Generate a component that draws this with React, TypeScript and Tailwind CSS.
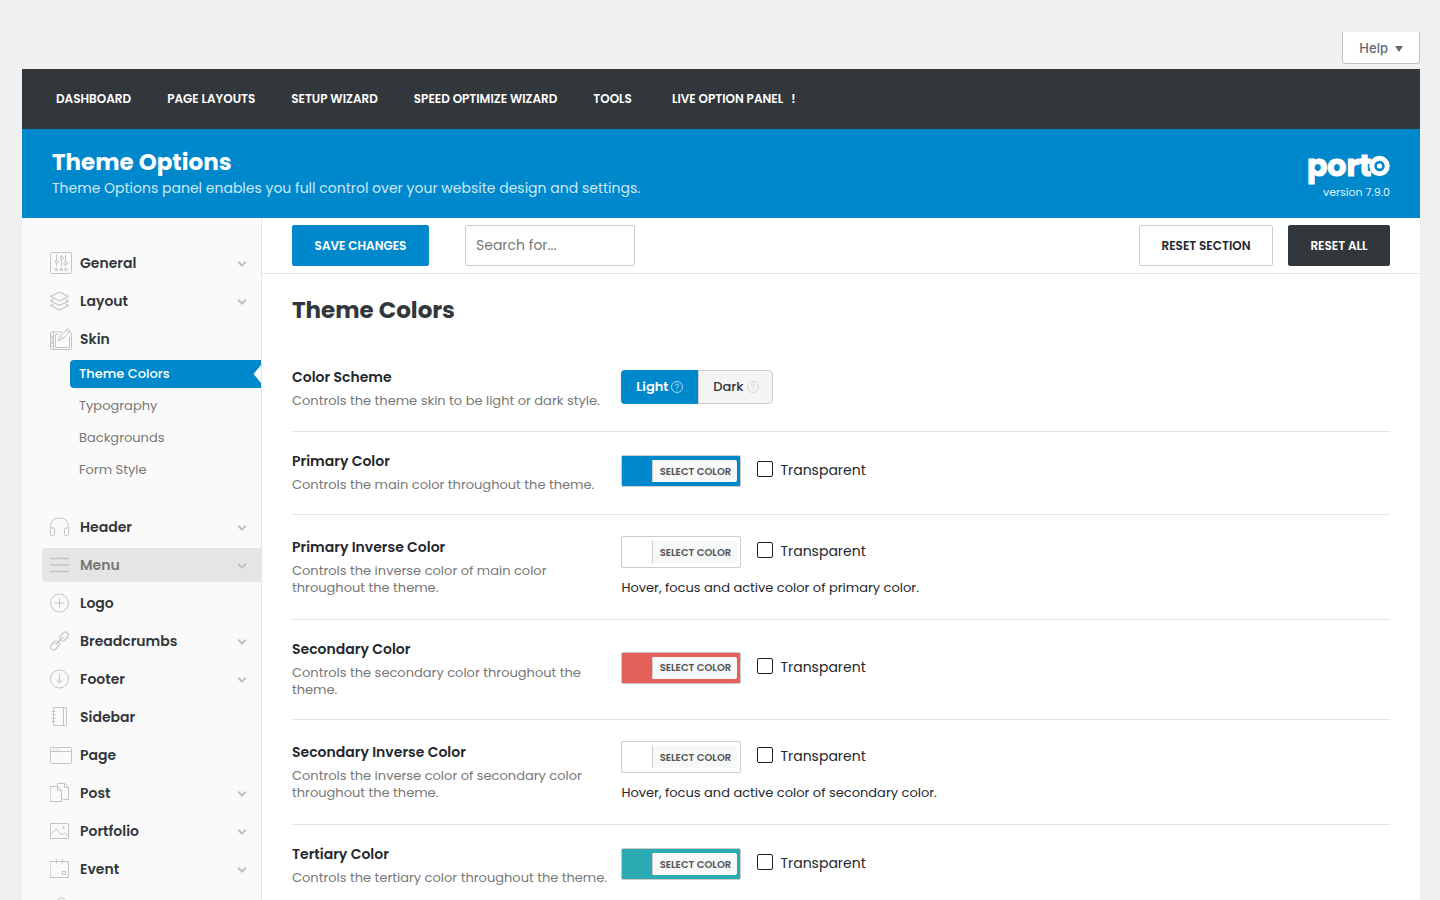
import type { ReactNode } from 'react'

const navLinks = ['DASHBOARD', 'PAGE LAYOUTS', 'SETUP WIZARD', 'SPEED OPTIMIZE WIZARD', 'TOOLS']

function Icon({ wide, children }: { wide?: boolean; children: ReactNode }) {
  return (
    <span className="flex w-[30px] shrink-0">
      <svg
        className={wide ? 'h-[22px] w-[22px]' : 'h-5 w-5'}
        viewBox={wide ? '0 0 22 22' : '0 0 20 20'}
        fill="none"
        stroke="#c2c4c6"
        strokeWidth="1"
        strokeLinecap="round"
        strokeLinejoin="round"
        aria-hidden="true"
      >
        {children}
      </svg>
    </span>
  )
}

const icons: Record<string, ReactNode> = {
  General: (
    <Icon wide>
      <rect x="0.5" y="0.5" width="21" height="21" rx="1" />
      <path d="M6.5 3v5M6.5 11v3M11.5 3.500v1M11.500 7.500v6.500M15.500 3v7M15.500 13v1" />
      <circle cx="6.500" cy="9.500" r="1.500" />
      <circle cx="11.500" cy="6" r="1.500" />
      <circle cx="15.500" cy="11.500" r="1.500" />
      <circle cx="6" cy="17.500" r="1.200" />
      <circle cx="11" cy="17.500" r="1.200" />
      <circle cx="15.700" cy="17.500" r="1.200" />
    </Icon>
  ),
  Layout: (
    <Icon>
      <path
        strokeWidth="1.200"
        d="M9.500 1L18.500 5.500L9.500 10L0.500 5.500ZM3 8.800L0.500 10L9.500 14.500L18.500 10L16 8.800M3 13.300L0.500 14.500L9.500 19L18.500 14.500L16 13.300"
      />
    </Icon>
  ),
  Skin: (
    <Icon wide>
      <path d="M12 4H1.500Q0.500 4 0.500 5V20.500Q0.500 21.500 1.500 21.500H20.500Q21.500 21.500 21.500 20.500V5.500L20 4.500M3.500 4v17.500M8 6.500H5.500V19.500H19.500V9" />
      <path d="M0.500 8h2v2.500h-2M0.500 13h2v2.500h-2M0.500 18h2" />
      <path d="M8.500 12.500L10.500 8L18 0.500L20.500 3L13 10.500ZM10.500 8L13 10.500M16.500 2L19 4.500" />
    </Icon>
  ),
  Header: (
    <Icon>
      <path d="M0.500 11V10Q0.500 1 9.500 1T18.500 10V11" />
      <path d="M0.500 11H3.500Q4.500 11 4.500 12V17.500Q4.500 18.500 3.500 18.500H1.500Q0.500 18.500 0.500 17.500ZM18.500 11H15.500Q14.500 11 14.500 12V17.500Q14.500 18.500 15.500 18.500H17.500Q18.500 18.500 18.500 17.500Z" />
    </Icon>
  ),
  Menu: (
    <Icon>
      <path strokeWidth="1.500" d="M0.700 3.500H18.300M0.700 10H18.300M0.700 16.500H18.300" />
    </Icon>
  ),
  Logo: (
    <Icon>
      <circle cx="9.500" cy="10" r="9" />
      <path d="M9.500 5.500v9M5 10h9" />
    </Icon>
  ),
  Breadcrumbs: (
    <Icon>
      <rect x="-5" y="-3" width="10" height="6" rx="3" strokeWidth="1.200" transform="translate(5 14.500) rotate(-45)" />
      <rect x="-5" y="-3" width="10" height="6" rx="3" strokeWidth="1.200" transform="translate(14 5.500) rotate(-45)" />
      <path strokeWidth="1.300" d="M6 13.500L13 6.500" />
    </Icon>
  ),
  Footer: (
    <Icon>
      <circle cx="9.500" cy="10" r="9" />
      <path d="M9.500 5.500v8.500M6 10.500L9.500 14L13 10.500" />
    </Icon>
  ),
  Sidebar: (
    <Icon>
      <rect x="3.500" y="0.500" width="13" height="18" rx="0.500" />
      <path d="M13.500 0.500v18M2 4.500h3M2 7.500h3M2 11.500h3M2 14.500h3" />
    </Icon>
  ),
  Page: (
    <Icon wide>
      <rect x="0.500" y="3.500" width="21" height="16" rx="1" />
      <path d="M0.500 7.500H21.500M3.500 5.500h.2M6 5.500h.2M8.500 5.500h.2" />
    </Icon>
  ),
  Post: (
    <Icon>
      <path d="M0.500 3.500H7.500L11.500 7.500V18.500H0.500ZM7.500 3.500V7.500H11.500" />
      <path d="M7.500 3V0.500H14.500L18.500 4.500V16.500H13.500M14.500 0.500V4.500H18.500" />
    </Icon>
  ),
  Portfolio: (
    <Icon>
      <rect x="0.500" y="2.500" width="18" height="15" rx="0.500" />
      <path d="M1 13.500L6 8L12 14L14.500 11.500L18 15" />
      <circle cx="13.500" cy="6.500" r="0.700" />
    </Icon>
  ),
  Event: (
    <Icon>
      <path strokeLinejoin="miter" d="M0.500 2.500H18.500V18.500H0.500ZM6.500 0.500V4M12.500 0.500V4M12.500 12.500H15.500V15.500H12.500Z" />
    </Icon>
  ),
  Member: (
    <Icon>
      <circle cx="11.500" cy="5" r="4" />
      <path d="M3 19Q4 10 11 10T19 19" />
    </Icon>
  ),
}

function Chevron() {
  return (
    <svg className="ml-auto h-2.5 w-2.5" viewBox="0 0 10 10" fill="none" stroke="#bfc1c2" strokeWidth="2" aria-hidden="true">
      <path d="M1.200 3.700L5 7.500L8.800 3.700" />
    </svg>
  )
}

function MenuItem({ name, more, active }: { name: string; more?: boolean; active?: boolean }) {
  return (
    <a
      href={'#' + name.toLowerCase()}
      className={
        'flex h-[34px] items-center rounded-l pr-3.5 pl-2 text-sm font-semibold ' +
        (active ? 'bg-[#e5e5e5] text-[#777777]' : 'text-[#32373c]')
      }
    >
      {icons[name]}
      {name}
      {more && <Chevron />}
    </a>
  )
}

function Sidebar() {
  return (
    <aside className="w-60 shrink-0 border-r border-[#e5e5e5] bg-[#fafafa] pt-7 pb-8 pl-5">
      <nav aria-label="Theme options" className="flex flex-col gap-1">
        <MenuItem name="General" more />
        <MenuItem name="Layout" more />
        <MenuItem name="Skin" />
        <div className="mb-[22px] ml-7 flex flex-col gap-1 text-[13px] text-[#777777]">
          <a
            href="#theme-colors"
            className="flex h-7 items-center justify-between rounded-l bg-[#0088cc] pl-[9px] font-medium text-white"
          >
            Theme Colors
            <svg className="h-5 w-2" viewBox="0 0 8 20" fill="#fff" aria-hidden="true">
              <path d="M8 1L0.500 10L8 19Z" />
            </svg>
          </a>
          {['Typography', 'Backgrounds', 'Form Style'].map((name) => (
            <a key={name} href={'#' + name.toLowerCase().replace(' ', '-')} className="flex h-7 items-center pl-[9px]">
              {name}
            </a>
          ))}
        </div>
        <MenuItem name="Header" more />
        <MenuItem name="Menu" more active />
        <MenuItem name="Logo" />
        <MenuItem name="Breadcrumbs" more />
        <MenuItem name="Footer" more />
        <MenuItem name="Sidebar" />
        <MenuItem name="Page" />
        <MenuItem name="Post" more />
        <MenuItem name="Portfolio" more />
        <MenuItem name="Event" more />
        <MenuItem name="Member" more />
      </nav>
    </aside>
  )
}

function Field({ title, text, children }: { title: string; text: string; children: ReactNode }) {
  return (
    <section className="grid grid-cols-[30%_1fr] items-center border-b border-[#e5e5e5] pt-[19px] pb-[21px]">
      <div className="pr-2.5">
        <h3 className="text-sm leading-5 font-semibold text-[#23282d]">{title}</h3>
        <p className="mt-[5px] text-[13px] leading-[17px] text-[#777777]">{text}</p>
      </div>
      {children}
    </section>
  )
}

type ColorFieldProps = { id: string; title: string; text: string; swatch: string; note?: string }

function ColorField({ id, title, text, swatch, note }: ColorFieldProps) {
  return (
    <Field title={title} text={text}>
      <div className={note ? 'pt-0.5' : 'pb-0.5'}>
        <div className="flex items-center">
          <button type="button" className={'flex h-8 w-[120px] rounded-xs border border-[#cccccc] py-1 pr-[3px] pl-[30px] ' + swatch}>
            <span className="flex h-[22px] grow items-center justify-center rounded-r-xs border-l border-[#cccccc] bg-[#f7f8f8] text-[10px] font-semibold whitespace-nowrap text-[#555555]">
              SELECT COLOR
            </span>
          </button>
          <input
            id={id}
            type="checkbox"
            className="mr-[7px] mb-1 ml-4 h-4 w-4 appearance-none rounded-xs border border-[#1e1e1e] bg-white"
          />
          <label htmlFor={id} className="pb-0.5 text-sm leading-5 text-[#23282d]">
            Transparent
          </label>
        </div>
        {note && <p className="mt-2.5 text-[13px] leading-5 text-[#23282d]">{note}</p>}
      </div>
    </Field>
  )
}

function Hint({ color }: { color: string }) {
  return (
    <svg className="h-3 w-3" viewBox="0 0 12 12" fill="none" stroke={color} strokeWidth="0.900" aria-hidden="true">
      <circle cx="6" cy="6" r="5.500" />
      <path d="M4.300 4.600Q4.300 3 6 3T7.700 4.600Q7.700 5.500 6 6.300V7.300M6 8.300V9.200" />
    </svg>
  )
}

const toolButton = 'h-[41px] rounded-xs border text-xs font-semibold'

export default function App() {
  return (
    <div className="h-screen overflow-x-hidden overflow-y-auto bg-[#f0f0f0] pr-5 pl-[22px] font-['Poppins','Inter',sans-serif] [scrollbar-width:none]">
      <div className="flex justify-end pt-8 pb-[5px]">
        <button
          type="button"
          className="flex h-8 items-center gap-1.5 rounded-b border border-t-0 border-[#c3c4c7] bg-white pt-0.5 pr-[15px] pl-4 font-['Inter',sans-serif] text-[13px] font-medium text-[#646970]"
        >
          Help
          <svg className="h-2 w-2.5" viewBox="0 0 10 8" fill="#646970" aria-hidden="true">
            <path d="M1 1H9L5 7Z" />
          </svg>
        </button>
      </div>

      <nav aria-label="Porto" className="flex h-[60px] items-center gap-9 bg-[#32373c] px-[34px] text-xs font-semibold text-white">
        {navLinks.map((name) => (
          <a key={name} href={'#' + name.toLowerCase().replaceAll(' ', '-')}>
            {name}
          </a>
        ))}
        <a href="#live-option-panel" className="flex gap-2 pl-1">
          LIVE OPTION PANEL <span>!</span>
        </a>
      </nav>

      <header className="flex h-[89px] items-center justify-between bg-[#0088cc] px-[30px] text-white">
        <div className="pb-1">
          <h1 className="text-[23px] leading-8 font-bold">Theme Options</h1>
          <p className="text-sm leading-5 text-[#cce7f5]">
            Theme Options panel enables you full control over your website design and settings.
          </p>
        </div>
        <div className="flex flex-col items-end">
          <svg className="h-9 w-[82px] overflow-visible" viewBox="0 0 82 36" fill="#fff" role="img" aria-label="porto">
            <text x="-1" y="26" fontSize="30" fontWeight="700" stroke="#fff" strokeWidth="1">
              port
            </text>
            <circle cx="71.500" cy="16" r="7.700" fill="none" stroke="#fff" strokeWidth="5" />
            <circle cx="71.500" cy="16" r="2.600" />
          </svg>
          <span className="text-[11px] leading-3 text-[#e0f1fa]">version 7.9.0</span>
        </div>
      </header>

      <div className="flex bg-white">
        <Sidebar />
        <main className="min-w-0 grow">
          <div className="flex h-14 items-center border-b border-[#e5e5e5] px-[30px]">
            <button type="button" className={toolButton + ' w-[137px] border-[#0088cc] bg-[#0088cc] text-white'}>
              SAVE CHANGES
            </button>
            <input
              type="search"
              aria-label="Search options"
              placeholder="Search for..."
              className="ml-9 h-[41px] w-[170px] rounded-xs border border-[#cccccc] px-2.5 text-sm placeholder:text-[#777777]"
            />
            <button type="button" className={toolButton + ' mr-[15px] ml-auto w-[134px] border-[#cccccc] bg-white text-[#23282d]'}>
              RESET SECTION
            </button>
            <button type="button" className={toolButton + ' w-[102px] border-[#32373c] bg-[#32373c] text-white'}>
              RESET ALL
            </button>
          </div>

          <div className="px-[30px] pt-5">
            <h2 className="mb-5 text-[23px] leading-8 font-bold text-[#32373c]">Theme Colors</h2>
            <Field title="Color Scheme" text="Controls the theme skin to be light or dark style.">
              <div className="flex pt-[5px] pb-1.5 text-[13px]">
                <button type="button" className="flex h-[34px] w-[77px] items-center justify-center gap-[3px] rounded-l bg-[#0088cc] font-semibold text-white">
                  Light
                  <Hint color="#bfe1f2" />
                </button>
                <button type="button" className="flex h-[34px] w-[75px] items-center justify-center gap-[3px] rounded-r border border-[#cccccc] bg-[#f5f5f5] font-medium text-[#32373c]">
                  Dark
                  <Hint color="#d5d5d5" />
                </button>
              </div>
            </Field>
            <ColorField id="primary" title="Primary Color" text="Controls the main color throughout the theme." swatch="bg-[#0088cc]" />
            <ColorField
              id="primary-inverse"
              title="Primary Inverse Color"
              text="Controls the inverse color of main color throughout the theme."
              swatch="bg-white"
              note="Hover, focus and active color of primary color."
            />
            <ColorField id="secondary" title="Secondary Color" text="Controls the secondary color throughout the theme." swatch="bg-[#e36159]" />
            <ColorField
              id="secondary-inverse"
              title="Secondary Inverse Color"
              text="Controls the inverse color of secondary color throughout the theme."
              swatch="bg-white"
              note="Hover, focus and active color of secondary color."
            />
            <ColorField id="tertiary" title="Tertiary Color" text="Controls the tertiary color throughout the theme." swatch="bg-[#2baab1]" />
          </div>
        </main>
      </div>
    </div>
  )
}
